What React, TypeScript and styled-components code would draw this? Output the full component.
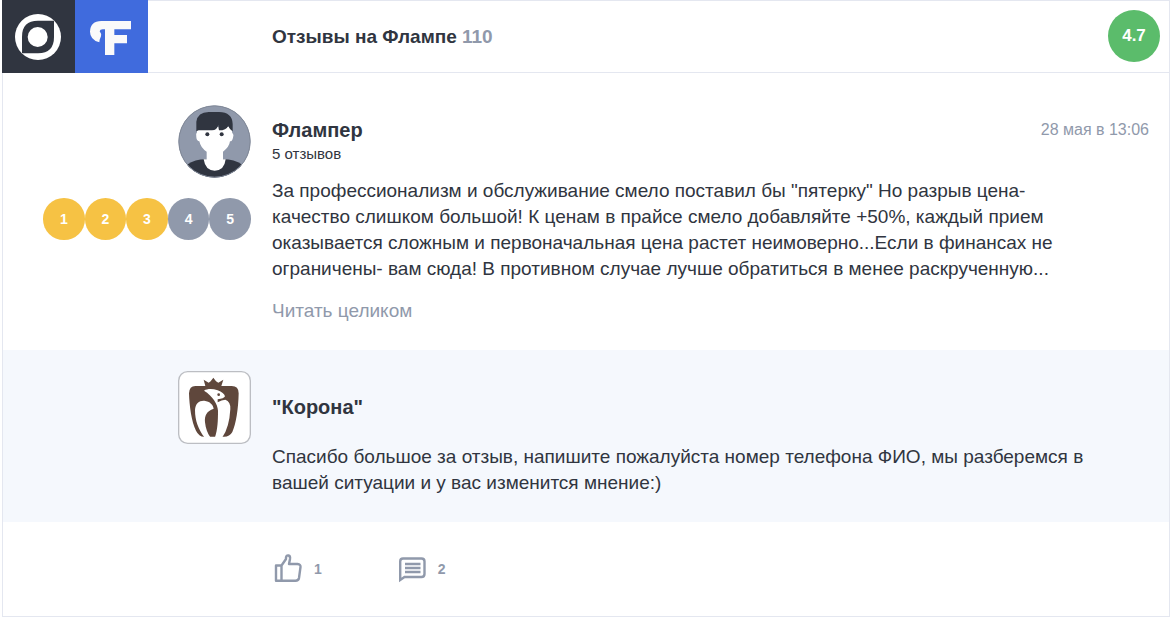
import React from "react";
import styled, { createGlobalStyle } from "styled-components";

const ink = "#303540";
const muted = "#9099ab";
const line = "#e4e7f0";

const GlobalStyle = createGlobalStyle`
  * { box-sizing: border-box; }
  body {
    margin: 0;
    background: #fff;
    color: ${ink};
    font: 19px/26px "Liberation Sans", Arial, sans-serif;
  }
  h1, h2, p { margin: 0; font-size: inherit; }
`;

const Card = styled.main`
  margin: 0 1px 0 2px;
  border: 1px solid ${line};
`;

const Header = styled.header`
  display: flex;
  align-items: center;
  height: 72px;
  padding: 0 9px 1px 0;
  border-bottom: 1px solid ${line};
`;

const Logos = styled.div`
  display: flex;
  align-self: flex-start;
  margin: -1px 0 0 -1px;
  flex: none;
  width: 270px;
`;

const Tile = styled.a<{ $bg: string }>`
  display: block;
  width: 73px;
  height: 73px;
  background: ${(p) => p.$bg};
  svg { display: block; width: 100%; height: 100%; }
`;

const Title = styled.h1`
  flex: 1;
  padding-top: 2px;
`;

const Count = styled.span`
  color: ${muted};
`;

const Rating = styled.div`
  display: grid;
  place-items: center;
  width: 52px;
  height: 52px;
  border-radius: 50%;
  background: #5bbc6b;
  color: #fff;
  font-size: 17px;
  font-weight: bold;
`;

const Row = styled.section<{ $tint?: boolean }>`
  display: grid;
  grid-template-columns: 248px minmax(0, 1fr);
  column-gap: 21px;
  padding: ${(p) => (p.$tint ? "21px 20px 26px 0" : "32px 20px 26px 0")};
  background: ${(p) => (p.$tint ? "#f5f8fd" : "#fff")};
`;

const Side = styled.div`
  display: flex;
  flex-direction: column;
  align-items: flex-end;
  gap: 20px;
`;

const Picture = styled.svg`
  display: block;
  width: 73px;
  height: 73px;
`;

const Scores = styled.ol`
  display: flex;
  width: 208px;
  margin: 0;
  padding: 0;
  list-style: none;
`;

const Score = styled.li<{ $on: boolean }>`
  display: grid;
  place-items: center;
  flex: 1;
  aspect-ratio: 1;
  border-radius: 50%;
  background: ${(p) => (p.$on ? "#f6c244" : muted)};
  color: #fff;
  font-size: 14px;
  font-weight: bold;
`;

const ReviewBody = styled.div`
  padding-top: 12px;
`;

const Heading = styled.div`
  display: flex;
  justify-content: space-between;
`;

const Name = styled.h2`
  && { font-size: 20px; }
`;

const When = styled.time`
  color: ${muted};
  font-size: 16px;
`;

const Reviews = styled.p`
  && {
    margin-bottom: 13px;
    font-size: 15px;
    line-height: 22px;
  }
`;

const Text = styled.p`
  max-width: 820px;
`;

const More = styled.a`
  display: inline-block;
  margin-top: 16px;
  color: ${muted};
  text-decoration: none;
`;

const ReplyBody = styled.div`
  display: grid;
  gap: 24px;
  padding-top: 23px;
`;

const Actions = styled.footer`
  display: flex;
  gap: 75px;
  padding: 31px 0 31px 270px;
`;

const Action = styled.button`
  display: flex;
  align-items: center;
  gap: 11px;
  height: 32px;
  padding: 0;
  border: 0;
  background: none;
  color: ${muted};
  font: bold 14px/20px "Liberation Sans", Arial, sans-serif;
  svg { width: 30px; height: 32px; fill: none; stroke: currentColor; stroke-width: 2.4; }
`;

const EyeLogo = () => (
  <svg viewBox="6 0 219 219" aria-hidden="true">
    <circle cx="114" cy="111" r="69" fill="#fff" />
    <path d="M66 160V110Q66 62 114 62H162V111Q162 160 114 160Z" fill={ink} />
    <circle cx="113" cy="111" r="30" fill="#fff" />
  </svg>
);

const FlampLogo = () => (
  <svg viewBox="225 0 219 219" aria-hidden="true">
    <path
      d="M393 63V88H343V105H381V130H343V165H315V88H308Q300 88 299 94Q305 101 303 109Q301 115 299 119L298 127Q270 119 270 95Q271 63 304 63Z"
      fill="#fafafa"
    />
  </svg>
);

const UserAvatar = () => (
  <Picture viewBox="25 28 219 219" role="img" aria-label="Флампер">
    <defs>
      <clipPath id="avatar"><circle cx="134.5" cy="137.5" r="108" /></clipPath>
    </defs>
    <g clipPath="url(#avatar)">
      <rect x="25" y="28" width="219" height="219" fill={muted} />
      <path d="M52 250V207Q76 191 108 191H160Q194 191 218 207V250Z" fill={ink} />
      <path
        d="M82 94H187V110Q193 116 190 126Q188 137 181 137Q179 154 160 168V191H168Q164 225 135 225Q107 225 102 191H111V168Q93 157 89 137Q81 136 80 125Q77 115 82 110Z"
        fill="#fff"
      />
      <path
        d="M80 107V78Q84 50 117 49H148Q188 50 189 85V107L184 103Q178 98 176 90Q170 104 148 104Q146 96 146 88Q142 104 127 104H87Z"
        fill={ink}
      />
      <circle cx="113" cy="116" r="6" fill={ink} />
      <circle cx="156" cy="116" r="6" fill={ink} />
    </g>
    <circle cx="134.5" cy="137.5" r="107" fill="none" stroke="#7f8796" strokeWidth="3" />
  </Picture>
);

const CrownLogo = () => (
  <Picture viewBox="25 25 219 219" role="img" aria-label="Корона">
    <rect x="27" y="27" width="215" height="215" rx="27" fill="#fff" stroke="#bcbec3" strokeWidth="4" />
    <g transform="translate(41 34)">
      <path
        d="M36 36H66L61 17L76 26L82 22L90 11L98 22L105 26L120 17L114 36H145Q166 36 166 58C165 105 158 150 147 174Q138 190 118 188H62Q47 188 38 170C25 145 18 95 17 58Q18 36 36 36Z"
        fill="#5f473c"
      />
      <path
        d="M63 190C45 165 35 140 35 108C36 88 48 79 63 80C80 82 90 93 91 104C70 111 63 125 65 145C67 165 73 178 81 190Z"
        fill="#fff"
      />
      <path
        d="M95 190C103 165 104 140 104 110C103 90 88 66 62 50C72 44 88 44 103 49Q122 56 125 67Q122 74 103 76V85Q115 78 126 77Q142 82 141 105Q138 160 117 190Z"
        fill="#fff"
      />
      <circle cx="106" cy="62" r="4" fill="#5f473c" />
    </g>
  </Picture>
);

const LikeIcon = () => (
  <svg viewBox="0 0 30 32" aria-hidden="true">
    <path
      strokeLinejoin="round"
      d="M3 12.500H8.500V27.800H3ZM8.500 12.500L13 6V4.500Q13.500 2 15.500 2.500Q17.500 3 17 6L16 11H24.500Q28 11.500 27.500 14L26 25Q25.500 27.800 22.500 27.800H8.500"
    />
  </svg>
);

const CommentIcon = () => (
  <svg viewBox="0 0 30 32" aria-hidden="true">
    <path d="M3.200 27V8.500Q3.200 5.500 6 5.500H24.500Q27.500 5.500 27.500 8.500V21Q27.500 24 24.500 24H7.500ZM8 11H23.500M8 15H23.500M8 19H23.500" />
  </svg>
);

export default function App() {
  return (
    <>
      <GlobalStyle />
      <Card>
        <Header>
          <Logos>
            <Tile $bg={ink} href="#reviews" aria-label="Отзывы"><EyeLogo /></Tile>
            <Tile $bg="#406bdd" href="#flamp" aria-label="Фламп"><FlampLogo /></Tile>
          </Logos>
          <Title>Отзывы на Флампе <Count>110</Count></Title>
          <Rating>4.7</Rating>
        </Header>
        <Row>
          <Side>
            <UserAvatar />
            <Scores aria-label="3 из 5">
              {[1, 2, 3, 4, 5].map((n) => <Score key={n} $on={n <= 3}>{n}</Score>)}
            </Scores>
          </Side>
          <ReviewBody>
            <Heading>
              <Name>Флампер</Name>
              <When>28 мая в 13:06</When>
            </Heading>
            <Reviews>5 отзывов</Reviews>
            <Text>
              За профессионализм и обслуживание смело поставил бы "пятерку" Но разрыв цена-качество
              слишком большой! К ценам в прайсе смело добавляйте +50%, каждый прием оказывается
              сложным и первоначальная цена растет неимоверно...Если в финансах не ограничены- вам
              сюда! В противном случае лучше обратиться в менее раскрученную...
            </Text>
            <More href="#full">Читать целиком</More>
          </ReviewBody>
        </Row>
        <Row $tint>
          <Side><CrownLogo /></Side>
          <ReplyBody>
            <Name>"Корона"</Name>
            <Text>
              Спасибо большое за отзыв, напишите пожалуйста номер телефона ФИО, мы разберемся в
              вашей ситуации и у вас изменится мнение:)
            </Text>
          </ReplyBody>
        </Row>
        <Actions>
          <Action type="button" aria-label="Нравится: 1"><LikeIcon />1</Action>
          <Action type="button" aria-label="Комментарии: 2"><CommentIcon />2</Action>
        </Actions>
      </Card>
    </>
  );
}
